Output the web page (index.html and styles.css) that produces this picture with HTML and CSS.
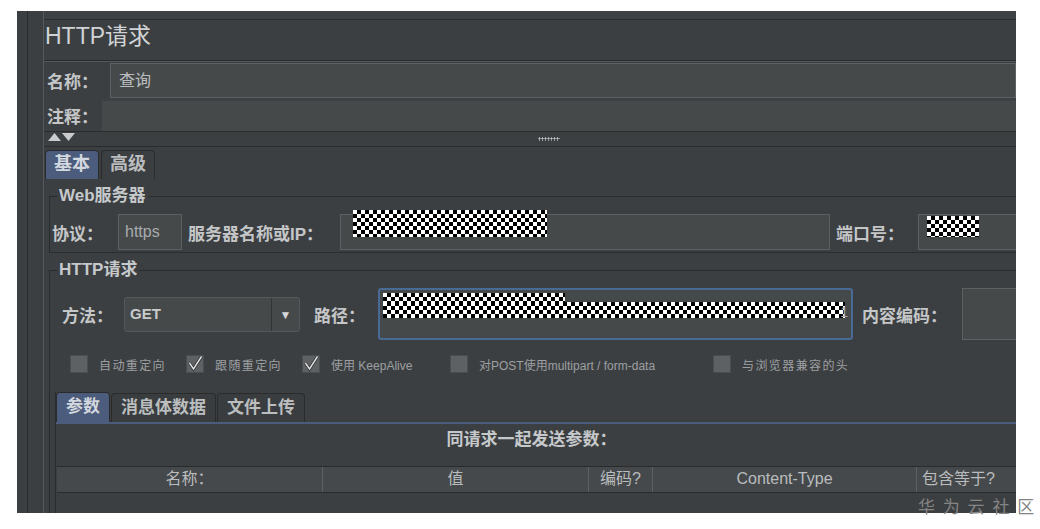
FILE: index.html
```html
<!DOCTYPE html>
<html lang="zh">
<head>
    <meta charset="UTF-8">
    <title>HTTP请求</title>
    <link rel="stylesheet" href="styles.css">
</head>
<body>
    <div class="window">
        <div class="gutter"></div>
        <div class="main">
            <div class="topbar"></div>
            <div class="title">HTTP请求</div>

            <div class="meta">
                <div class="meta-row name-row">
                    <span class="meta-label">名称：</span>
                    <div class="meta-field">查询</div>
                </div>
                <div class="meta-row comment-row">
                    <span class="meta-label">注释：</span>
                    <div class="meta-field flat"></div>
                </div>
            </div>

            <div class="splitter">
                <svg class="arrows" width="28" height="9" viewBox="0 0 28 9">
                    <polygon points="0,8 6.5,0 13,8" fill="#c9cbcd"/>
                    <polygon points="14,0 27,0 20.5,8" fill="#c9cbcd"/>
                </svg>
                <span class="grip"></span>
            </div>

            <div class="top-tabs">
                <div class="tab active">基本</div>
                <div class="tab">高级</div>
            </div>

            <div class="tab-body">
                <fieldset class="group">
                    <legend>Web服务器</legend>
                    <div class="form-row">
                        <span class="label w-proto">协议：</span>
                        <div class="input proto">https</div>
                        <span class="label w-host">服务器名称或IP：</span>
                        <div class="input host"><span class="redact host-redact"></span></div>
                        <span class="label w-port">端口号：</span>
                        <div class="input grow"><span class="redact port-redact"></span></div>
                    </div>
                </fieldset>

                <fieldset class="group http-group">
                    <legend>HTTP请求</legend>
                    <div class="form-row method-row">
                        <span class="label w-method">方法：</span>
                        <div class="select">
                            <span class="select-value">GET</span>
                            <span class="select-arrow">▼</span>
                        </div>
                        <span class="label w-path">路径：</span>
                        <div class="input path">
                            <span class="redact path-top"></span>
                            <span class="redact path-bottom"></span>
                            <span class="path-tail">1</span>
                        </div>
                        <span class="label w-enc">内容编码：</span>
                        <div class="input grow tall"></div>
                    </div>

                    <div class="check-row">
                        <div class="check">
                            <span class="box"></span>
                            <span class="l1">自动重定向</span>
                        </div>
                        <div class="check">
                            <span class="box on"><svg width="16" height="16" viewBox="0 0 16 16"><path d="M2.5 7 L6.5 13 L14.5 0.5" fill="none" stroke="#2e2f30" stroke-width="3"/><path d="M2.5 7 L6.5 13 L14.5 0.5" fill="none" stroke="#e4e4e4" stroke-width="1.4"/></svg></span>
                            <span class="l2">跟随重定向</span>
                        </div>
                        <div class="check">
                            <span class="box on"><svg width="16" height="16" viewBox="0 0 16 16"><path d="M2.5 7 L6.5 13 L14.5 0.5" fill="none" stroke="#2e2f30" stroke-width="3"/><path d="M2.5 7 L6.5 13 L14.5 0.5" fill="none" stroke="#e4e4e4" stroke-width="1.4"/></svg></span>
                            <span class="l3">使用 KeepAlive</span>
                        </div>
                        <div class="check">
                            <span class="box"></span>
                            <span class="l4">对POST使用multipart / form-data</span>
                        </div>
                        <div class="check">
                            <span class="box"></span>
                            <span class="l5">与浏览器兼容的头</span>
                        </div>
                    </div>

                    <div class="sub-panel">
                        <div class="sub-tabs">
                            <div class="sub-tab active">参数</div>
                            <div class="sub-tab">消息体数据</div>
                            <div class="sub-tab">文件上传</div>
                        </div>
                        <div class="sub-line"></div>
                        <div class="caption">同请求一起发送参数：</div>
                        <div class="table-head">
                            <div class="th c-name">名称：</div>
                            <div class="th c-value">值</div>
                            <div class="th c-enc">编码?</div>
                            <div class="th c-type">Content-Type</div>
                            <div class="th c-eq">包含等于?</div>
                        </div>
                        <div class="table-body"></div>
                    </div>
                </fieldset>
            </div>
        </div>
    </div>

    <div class="watermark">华 为 云 社 区</div>
</body>
</html>
```

FILE: styles.css
```css
body {
    margin: 0;
    background: #ffffff;
    font-family: "Liberation Sans", "Noto Sans CJK SC", sans-serif;
    color: #bbbdbf;
}
.window {
    display: flex;
    width: 999px;
    height: 502px;
    margin: 11px 0 0 17px;
    background: #3c3f41;
    overflow: hidden;
}
.gutter {
    flex: none;
    width: 10px;
    border-right: 1px solid #2b2b2b;
    margin-right: 15px;
}
.main {
    flex: 1;
    min-width: 0;
    display: flex;
    flex-direction: column;
    border-left: 1px solid #55595b;
}
.main > * {
    flex-shrink: 0;
}
.topbar {
    height: 8px;
    background: #3f4244;
    border-bottom: 1px solid #2b2b2b;
}
.title {
    height: 40px;
    line-height: 33px;
    padding-left: 1px;
    font-size: 23px;
    color: #d0d3d5;
    border-bottom: 1px solid #2b2b2b;
}
.meta {
    border-top: 1px solid #54585a;
}
.meta-row {
    display: flex;
    align-items: center;
}
.meta-label {
    flex: none;
    padding-left: 3px;
    font-size: 17px;
    font-weight: bold;
    color: #c4c6c8;
}
.name-row {
    height: 37px;
}
.name-row .meta-label {
    width: 63px;
}
.meta-field {
    flex: 1;
    height: 35px;
    box-sizing: border-box;
    padding-left: 8px;
    line-height: 33px;
    font-size: 16px;
    background: #45494a;
    border: 1px solid #5e6163;
}
.comment-row {
    height: 32px;
}
.comment-row .meta-label {
    width: 55px;
}
.meta-field.flat {
    height: 32px;
    border: none;
    box-shadow: inset 0 2px 0 #3e4143;
}
.splitter {
    height: 14px;
    display: flex;
    align-items: center;
    padding-left: 4px;
    border-top: 1px solid #2b2b2b;
    border-bottom: 1px solid #2b2b2b;
}
.arrows {
    margin-top: -4px;
}
.grip {
    width: 22px;
    height: 4px;
    margin-left: 462px;
    background-image: radial-gradient(circle, #c2c4c6 0.9px, transparent 1.2px);
    background-size: 3px 3px;
}
.top-tabs {
    height: 32px;
    display: flex;
    align-items: flex-end;
    gap: 2px;
    padding-left: 1px;
}
.tab {
    height: 29px;
    box-sizing: border-box;
    padding: 0 8px;
    line-height: 27px;
    font-size: 18px;
    font-weight: bold;
    border: 1px solid #2b2b2b;
    border-bottom: none;
    border-radius: 4px 4px 0 0;
}
.tab.active {
    background: #4b5c7c;
    color: #d3d7de;
}
.tab-body {
    flex: 1;
    padding-left: 5px;
}
.group {
    margin: 8px -12px 0 0;
    padding: 0 2px 2px;
    border: 1px solid #2a2c2d;
    min-width: 0;
}
.group legend {
    margin-left: 5px;
    padding: 0 2px;
    font-size: 17px;
    font-weight: bold;
    line-height: 18px;
    color: #c6c9cb;
}
.http-group {
    margin-top: 8px;
}
.form-row {
    display: flex;
    align-items: center;
    height: 36px;
    margin-top: 9px;
}
.label {
    flex: none;
    font-size: 17px;
    font-weight: bold;
    white-space: nowrap;
    color: #c4c6c8;
}
.w-proto { width: 66px; }
.w-host { width: 152px; }
.w-port { width: 82px; }
.w-method { width: 62px; padding-left: 10px; }
.w-path { width: 64px; }
.w-enc { width: 100px; }
.input {
    position: relative;
    flex: none;
    height: 36px;
    box-sizing: border-box;
    background: #45494a;
    border: 1px solid #5e6163;
}
.proto {
    width: 64px;
    margin-right: 6px;
    padding-left: 6px;
    line-height: 34px;
    font-size: 16px;
    color: #a9acae;
}
.host {
    width: 490px;
    margin-right: 6px;
}
.grow {
    flex: 1;
}
.method-row {
    height: 52px;
}
.select {
    flex: none;
    display: flex;
    width: 176px;
    height: 35px;
    margin-right: 14px;
    box-sizing: border-box;
    background: #45494a;
    border: 1px solid #55595b;
    border-radius: 3px;
}
.select-value {
    flex: 1;
    padding-left: 5px;
    line-height: 31px;
    font-size: 15px;
    font-weight: bold;
    color: #c9cbcd;
}
.select-arrow {
    width: 27px;
    border-left: 1px solid #323436;
    text-align: center;
    line-height: 34px;
    font-size: 12px;
    color: #d4d6d8;
}
.input.path {
    width: 475px;
    height: 52px;
    margin-right: 9px;
    border: 2px solid #4a6a96;
    border-radius: 3px;
}
.input.tall {
    height: 52px;
}
.redact {
    position: absolute;
    background: repeating-conic-gradient(#000 0 25%, #fff 0 50%) 0 0 / 8px 8px;
}
.host-redact {
    left: 12px;
    top: -5px;
    width: 194px;
    height: 27px;
}
.port-redact {
    left: 8px;
    top: 1px;
    width: 52px;
    height: 21px;
}
.path-top {
    left: 3px;
    top: 3px;
    width: 182px;
    height: 10px;
}
.path-bottom {
    left: 3px;
    top: 12px;
    width: 462px;
    height: 16px;
}
.path-tail {
    position: absolute;
    right: 3px;
    top: 14px;
    font-size: 14px;
    color: #a9acae;
}
.check-row {
    display: flex;
    align-items: center;
    height: 18px;
    margin-top: 15px;
    padding-left: 18px;
    font-size: 12px;
    color: #9c9fa1;
}
.check {
    display: flex;
    align-items: center;
    margin-right: 20px;
    white-space: nowrap;
}
.box {
    display: flex;
    flex: none;
    width: 18px;
    height: 18px;
    margin-right: 11px;
    box-sizing: border-box;
    background-color: #5e6163;
    border: 1px solid #4b4e50;
}
.l1, .l2, .l5 {
    letter-spacing: 1.4px;
}
.l3 {
    width: 99px;
}
.l4 {
    width: 214px;
}
.sub-panel {
    margin: 19px 0 0 3px;
    border-left: 1px solid #2b2b2b;
}
.sub-tabs {
    display: flex;
    align-items: flex-end;
    gap: 1px;
    height: 30px;
}
.sub-tab {
    height: 29px;
    box-sizing: border-box;
    padding: 0 9px;
    line-height: 27px;
    font-size: 17px;
    font-weight: bold;
    background: #3a3d3f;
    border: 1px solid #2b2b2b;
    border-bottom: none;
    border-radius: 4px 4px 0 0;
}
.sub-tab.active {
    height: 30px;
    background: #4b5c7c;
    color: #d3d7de;
}
.sub-line {
    height: 2px;
    background: #4b5c7c;
}
.caption {
    margin-top: 6px;
    padding-right: 18px;
    line-height: 20px;
    text-align: center;
    font-size: 17px;
    font-weight: bold;
    color: #c6c9cb;
}
.table-head {
    display: flex;
    height: 25px;
    margin: 16px 0 0 1px;
    background: #46494b;
    border-top: 1px solid #2b2b2b;
    border-bottom: 1px solid #2b2b2b;
    font-size: 16px;
    color: #b9bcbe;
}
.th {
    flex: none;
    line-height: 24px;
    text-align: center;
    border-right: 1px solid #5c6062;
    white-space: nowrap;
}
.c-name { width: 265px; }
.c-value { width: 265px; }
.c-enc { width: 63px; }
.c-type { width: 263px; }
.c-eq { width: 110px; text-align: left; padding-left: 5px; border-right: none; }
.table-body {
    height: 40px;
    background: #3c3f41;
}
.watermark {
    position: absolute;
    left: 918px;
    top: 493px;
    font-family: "Noto Sans CJK SC", sans-serif;
    font-size: 17px;
    letter-spacing: 2px;
    color: #858585;
    white-space: nowrap;
}
```
